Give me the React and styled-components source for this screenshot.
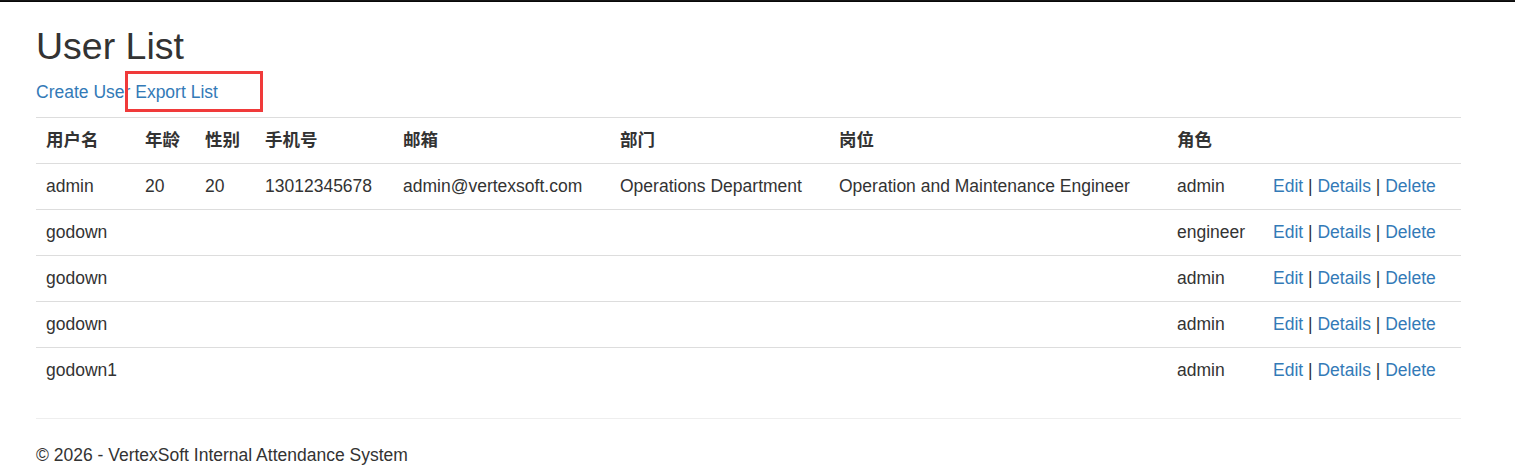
import React from 'react';
import styled, { createGlobalStyle } from 'styled-components';

const GlobalStyle = createGlobalStyle`
  html, body {
    margin: 0;
    padding: 0;
    background: #fff;
  }
  body {
    font-family: "Liberation Sans", Arial, "Noto Sans CJK SC", sans-serif;
    font-size: 17.5px;
    line-height: 1.42857;
    color: #333;
  }
`;

const NavEdge = styled.div`
  height: 2px;
  background: #161616;
  border-bottom: 1px solid #080808;
  box-sizing: border-box;
`;

const Container = styled.div`
  width: 1425px;
  margin-left: 36px;
`;

const Title = styled.h2`
  font-size: 37.5px;
  font-weight: 500;
  line-height: 1.1;
  margin: 24px 0 12.5px;
  color: #333;
`;

const Actions = styled.p`
  position: relative;
  margin: 0 0 12.5px;
`;

const Link = styled.a`
  color: #337ab7;
  text-decoration: none;
  cursor: pointer;
`;

// annotation box drawn over the toolbar
const Highlight = styled.span`
  position: absolute;
  left: 89px;
  top: -9px;
  width: 138px;
  height: 41px;
  border: 3px solid #f03a3a;
  box-sizing: border-box;
  pointer-events: none;
`;

const Table = styled.table`
  width: 100%;
  border-collapse: collapse;
  border-spacing: 0;
  margin-bottom: 24px;
  table-layout: fixed;
`;

const Th = styled.th`
  text-align: left;
  font-family: "Liberation Sans", Arial, "Noto Sans CJK SC", sans-serif;
  font-weight: bold;
  padding: 10px;
  height: 46px;
  box-sizing: border-box;
  border-top: 1px solid #ddd;
  border-bottom: 1px solid #ddd;
  vertical-align: middle;
  width: ${(p) => p.$w}px;
`;

const Td = styled.td`
  padding: 10px;
  height: 46px;
  box-sizing: border-box;
  vertical-align: middle;
  border-top: ${(p) => (p.$first ? 'none' : '1px solid #ddd')};
  white-space: nowrap;
`;

const Rule = styled.hr`
  border: 0;
  border-top: 1px solid #eee;
  margin: 24px 0;
`;

const Footer = styled.footer`
  p {
    margin: 0;
  }
`;

const columns = [
  { label: '用户名', w: 99 },
  { label: '年龄', w: 60 },
  { label: '性别', w: 60 },
  { label: '手机号', w: 138 },
  { label: '邮箱', w: 217 },
  { label: '部门', w: 219 },
  { label: '岗位', w: 338 },
  { label: '角色', w: 96 },
  { label: '', w: 198 },
];

const users = [
  {
    name: 'admin',
    age: '20',
    gender: '20',
    phone: '13012345678',
    email: 'admin@vertexsoft.com',
    dept: 'Operations Department',
    post: 'Operation and Maintenance Engineer',
    role: 'admin',
  },
  { name: 'godown', role: 'engineer' },
  { name: 'godown', role: 'admin' },
  { name: 'godown', role: 'admin' },
  { name: 'godown1', role: 'admin' },
];

export default function App() {
  return (
    <>
      <GlobalStyle />
      <NavEdge />
      <Container>
        <Title>User List</Title>
        <Actions>
          <Link>Create User</Link> <Link>Export List</Link>
          <Highlight />
        </Actions>
        <Table>
          <thead>
            <tr>
              {columns.map((c, i) => (
                <Th key={i} $w={c.w}>
                  {c.label}
                </Th>
              ))}
            </tr>
          </thead>
          <tbody>
            {users.map((u, i) => (
              <tr key={i}>
                <Td $first={i === 0}>{u.name}</Td>
                <Td $first={i === 0}>{u.age}</Td>
                <Td $first={i === 0}>{u.gender}</Td>
                <Td $first={i === 0}>{u.phone}</Td>
                <Td $first={i === 0}>{u.email}</Td>
                <Td $first={i === 0}>{u.dept}</Td>
                <Td $first={i === 0}>{u.post}</Td>
                <Td $first={i === 0}>{u.role}</Td>
                <Td $first={i === 0}>
                  <Link>Edit</Link> | <Link>Details</Link> | <Link>Delete</Link>
                </Td>
              </tr>
            ))}
          </tbody>
        </Table>
        <Rule />
        <Footer>
          <p>© 2026 - VertexSoft Internal Attendance System</p>
        </Footer>
      </Container>
    </>
  );
}
